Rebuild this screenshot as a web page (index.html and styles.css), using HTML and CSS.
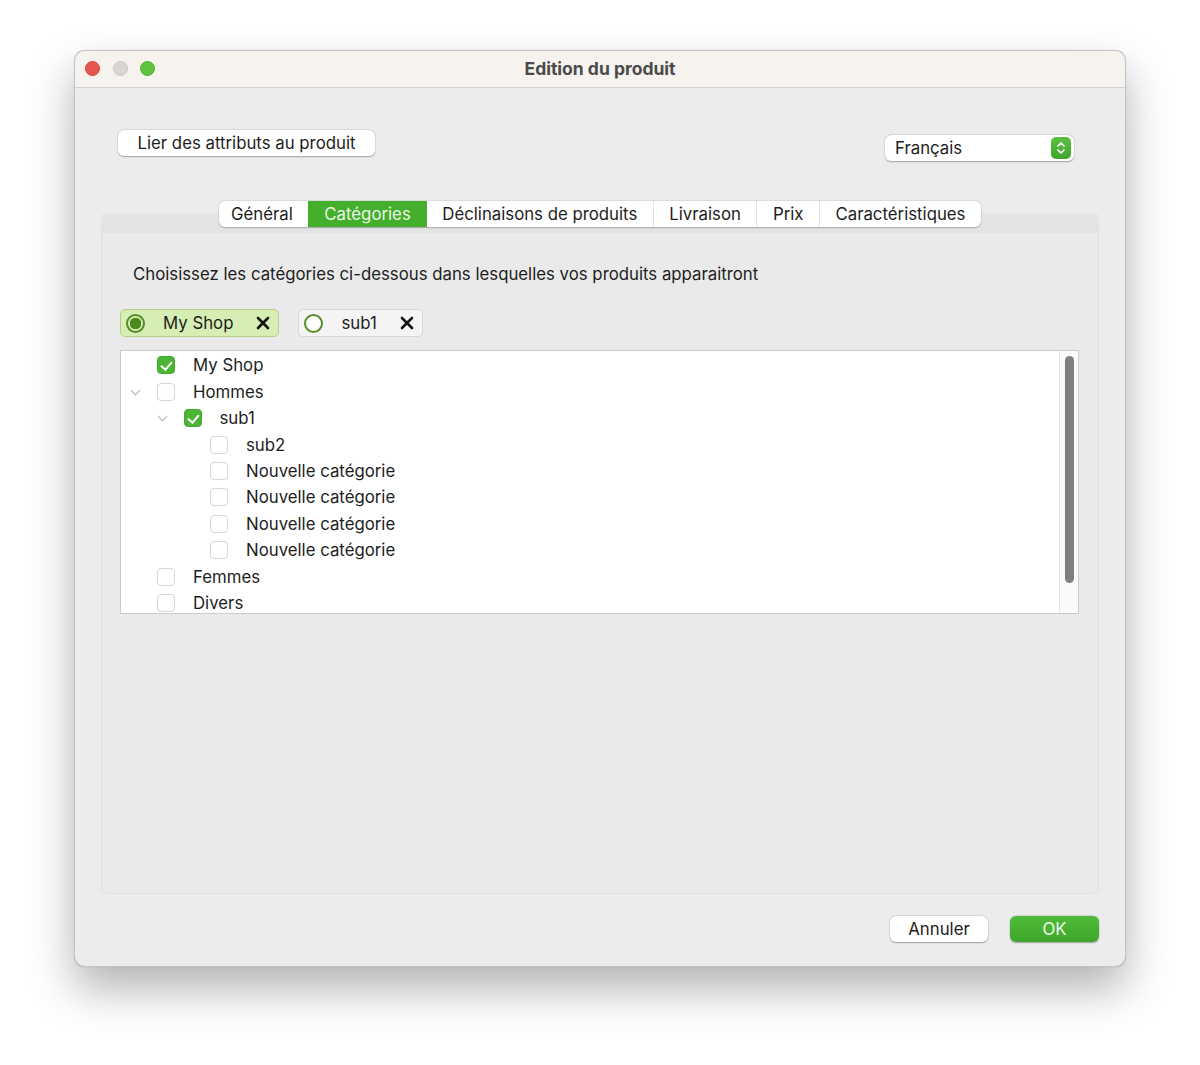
FILE: index.html
```html
<!DOCTYPE html>
<html lang="fr">
<head>
    <meta charset="UTF-8">
    <title>Edition du produit</title>
    <link rel="stylesheet" href="styles.css">
</head>
<body>

    <!-- Fenetre -->
    <div class="window">
        <div class="titlebar">
            <div class="lights">
                <span class="light red"></span>
                <span class="light gray"></span>
                <span class="light green"></span>
            </div>
            <div class="title">Edition du produit</div>
        </div>

        <div class="content">
            <div class="top-row">
                <button class="btn btn-link">Lier des attributs au produit</button>
                <div class="select">
                    <span>Français</span>
                    <span class="stepper">
                        <svg width="12" height="16" viewBox="0 0 12 16"><path d="M3 6 L6 3 L9 6 M3 10 L6 13 L9 10" fill="none" stroke="#fff" stroke-width="1.7" stroke-linecap="round" stroke-linejoin="round"/></svg>
                    </span>
                </div>
            </div>

            <div class="tabview">
                <div class="tabs">
                    <div class="tab">Général</div>
                    <div class="tab active">Catégories</div>
                    <div class="tab">Déclinaisons de produits</div>
                    <div class="tab">Livraison</div>
                    <div class="tab">Prix</div>
                    <div class="tab">Caractéristiques</div>
                </div>
                <div class="panel">
                    <p class="intro">Choisissez les catégories ci-dessous dans lesquelles vos produits apparaitront</p>

                    <div class="chips">
                        <div class="chip selected">
                            <span class="radio on"></span>
                            <span class="chip-label">My Shop</span>
                            <svg class="chip-x" width="14" height="14" viewBox="0 0 14 14"><path d="M2 2 L12 12 M12 2 L2 12" stroke="#111" stroke-width="2.6" stroke-linecap="round"/></svg>
                        </div>
                        <div class="chip">
                            <span class="radio"></span>
                            <span class="chip-label">sub1</span>
                            <svg class="chip-x" width="14" height="14" viewBox="0 0 14 14"><path d="M2 2 L12 12 M12 2 L2 12" stroke="#111" stroke-width="2.6" stroke-linecap="round"/></svg>
                        </div>
                    </div>

                    <div class="tree">
                        <div class="rows">
                            <div class="row"><span class="twisty"></span><span class="check on"></span><span>My Shop</span></div>
                            <div class="row"><span class="twisty open"></span><span class="check"></span><span>Hommes</span></div>
                            <div class="row lvl1"><span class="twisty open"></span><span class="check on"></span><span>sub1</span></div>
                            <div class="row lvl2"><span class="twisty"></span><span class="check"></span><span>sub2</span></div>
                            <div class="row lvl2"><span class="twisty"></span><span class="check"></span><span>Nouvelle catégorie</span></div>
                            <div class="row lvl2"><span class="twisty"></span><span class="check"></span><span>Nouvelle catégorie</span></div>
                            <div class="row lvl2"><span class="twisty"></span><span class="check"></span><span>Nouvelle catégorie</span></div>
                            <div class="row lvl2"><span class="twisty"></span><span class="check"></span><span>Nouvelle catégorie</span></div>
                            <div class="row"><span class="twisty"></span><span class="check"></span><span>Femmes</span></div>
                            <div class="row"><span class="twisty"></span><span class="check"></span><span>Divers</span></div>
                        </div>
                        <div class="scrollbar"><div class="thumb"></div></div>
                    </div>
                </div>
            </div>

            <div class="footer">
                <button class="btn btn-cancel">Annuler</button>
                <button class="btn btn-ok">OK</button>
            </div>
        </div>
    </div>

</body>
</html>
```

FILE: styles.css
```css
html, body {
    margin: 0;
    min-height: 1065px;
}
body {
    background-color: #fff;
    font-family: 'Inter', 'Liberation Sans', sans-serif;
    color: #1d1d1d;
    padding: 50px 0 0 74px;
    box-sizing: border-box;
}
.window {
    width: 1050px;
    height: 915px;
    background-color: #ececec;
    border: 1px solid #c4c4c4;
    border-radius: 11px;
    box-shadow: 0 22px 45px rgba(0, 0, 0, 0.3), 0 0 1px rgba(0, 0, 0, 0.3);
    overflow: hidden;
    display: flex;
    flex-direction: column;
}
.titlebar {
    height: 36px;
    background-color: #f6f3ef;
    border-bottom: 1px solid #d5d3d0;
    display: flex;
    align-items: center;
    position: relative;
}
.lights {
    display: flex;
    gap: 12.5px;
    padding-left: 10px;
    margin-top: -1px;
}
.light {
    width: 13px;
    height: 13px;
    border-radius: 50%;
    display: block;
}
.light.red { background-color: #e65550; border: 0.5px solid #d0453f; }
.light.gray { background-color: #d8d6d4; border: 0.5px solid #c9c7c5; }
.light.green { background-color: #5ec43f; border: 0.5px solid #4daf31; }
.title {
    position: absolute;
    left: 0;
    right: 0;
    top: 7px;
    text-align: center;
    font-size: 17.5px;
    font-weight: 700;
    color: #4a4a4a;
    pointer-events: none;
}
.content {
    flex: 1;
    padding: 0 26px;
    display: flex;
    flex-direction: column;
}
.top-row {
    display: flex;
    justify-content: space-between;
    align-items: flex-start;
    padding: 42px 25px 0 17px;
}
.btn {
    font-family: inherit;
    font-size: 16.8px;
    color: #1d1d1d;
    background-color: #fff;
    border: none;
    border-radius: 6px;
    height: 26px;
    padding: 0 18px;
    box-shadow: 0 0.5px 1.5px rgba(0, 0, 0, 0.3), 0 0 0 0.5px rgba(0, 0, 0, 0.06);
}
.btn-link {
    padding: 0 19.5px;
}
.select {
    margin-top: 5px;
    width: 189px;
    height: 26px;
    background-color: #fff;
    border-radius: 6px;
    box-shadow: 0 0.5px 1.5px rgba(0, 0, 0, 0.3), 0 0 0 0.5px rgba(0, 0, 0, 0.06);
    display: flex;
    align-items: center;
    justify-content: space-between;
    padding: 0 3px 0 10px;
    box-sizing: border-box;
    font-size: 16.8px;
}
.stepper {
    width: 20px;
    height: 22px;
    border-radius: 5px;
    background: linear-gradient(#5cc043, #3ea42a);
    display: flex;
    align-items: center;
    justify-content: center;
}
.tabview {
    margin-top: 40px;
    display: flex;
    flex-direction: column;
}
.tabs {
    display: flex;
    align-self: center;
    background-color: #fff;
    border-radius: 6px;
    box-shadow: 0 0.5px 1.5px rgba(0, 0, 0, 0.25), 0 0 0 0.5px rgba(0, 0, 0, 0.06);
    position: relative;
    z-index: 1;
    margin-bottom: -14px;
    overflow: hidden;
}
.tab {
    height: 26px;
    line-height: 26px;
    padding: 0 15.5px;
    font-size: 16.8px;
    border-left: 1px solid #e2e2e2;
}
.tab:first-child {
    border-left: none;
    padding-left: 12px;
}
.tab.active {
    background-color: #44ae2d;
    color: #eaf7e4;
    border-left: none;
    padding: 0 16px;
}
.tab.active + .tab {
    border-left: none;
}
.panel {
    height: 681px;
    box-sizing: border-box;
    background-color: #eaeaea;
    border: 1px solid #e0e0e0;
    border-top: 20px solid #e4e4e4;
    border-radius: 5px;
    padding: 0 19px 0 18px;
}
.intro {
    margin: 30px 0 0 13px;
    font-size: 16.8px;
    line-height: 22px;
}
.chips {
    display: flex;
    gap: 19px;
    margin-top: 24px;
}
.chip {
    height: 28px;
    box-sizing: border-box;
    display: flex;
    align-items: center;
    padding: 0 8px 0 5px;
    background-color: #f4f4f4;
    border: 1px solid #d7d7d7;
    border-radius: 5px;
    font-size: 16.8px;
}
.chip.selected {
    background-color: #d6edb4;
    border-color: #b3cd8c;
}
.radio {
    width: 19px;
    height: 19px;
    box-sizing: border-box;
    border-radius: 50%;
    border: 2px solid #558d2a;
    background-color: #fff;
}
.radio.on {
    background: radial-gradient(circle, #4d8a1d 0 5.5px, #d6edb4 6px);
}
.chip-label {
    margin: 0 23px 0 18px;
}
.tree {
    margin-top: 13px;
    height: 264px;
    box-sizing: border-box;
    background-color: #fff;
    border: 1px solid #cbcbcb;
    display: flex;
    overflow: hidden;
}
.rows {
    flex: 1;
    padding-top: 1px;
}
.row {
    height: 26.45px;
    display: flex;
    align-items: center;
    font-size: 16.8px;
}
.row.lvl1 { padding-left: 26.5px; }
.row.lvl2 { padding-left: 53px; }
.twisty {
    width: 36px;
    height: 26px;
    position: relative;
}
.twisty.open::before {
    content: "";
    position: absolute;
    left: 11px;
    top: 8px;
    width: 6px;
    height: 6px;
    border-right: 1.3px solid #b0b0b0;
    border-bottom: 1.3px solid #b0b0b0;
    transform: rotate(45deg);
}
.check {
    width: 18px;
    height: 18px;
    box-sizing: border-box;
    border: 1px solid #d6d6d6;
    border-radius: 4px;
    margin-right: 18px;
    background-color: #fff;
    position: relative;
}
.check.on {
    background-color: #4cb535;
    border-color: #45a82f;
}
.check.on::after {
    content: "";
    position: absolute;
    left: 5px;
    top: 1.5px;
    width: 4.5px;
    height: 9px;
    border-right: 2.6px solid #fff;
    border-bottom: 2.6px solid #fff;
    transform: rotate(40deg);
}
.scrollbar {
    width: 19px;
    background-color: #fafafa;
    border-left: 1px solid #e6e6e6;
    padding: 5px 0 0 5px;
    box-sizing: border-box;
}
.thumb {
    width: 9px;
    height: 227px;
    border-radius: 5px;
    background-color: #7f7f7f;
}
.footer {
    display: flex;
    justify-content: flex-end;
    gap: 22px;
    margin-top: 22px;
}
.btn-cancel {
    width: 98px;
    padding: 0;
}
.btn-ok {
    width: 89px;
    padding: 0;
    background: linear-gradient(#4fbb38, #3fa62b);
    color: #eef8ea;
}
```
